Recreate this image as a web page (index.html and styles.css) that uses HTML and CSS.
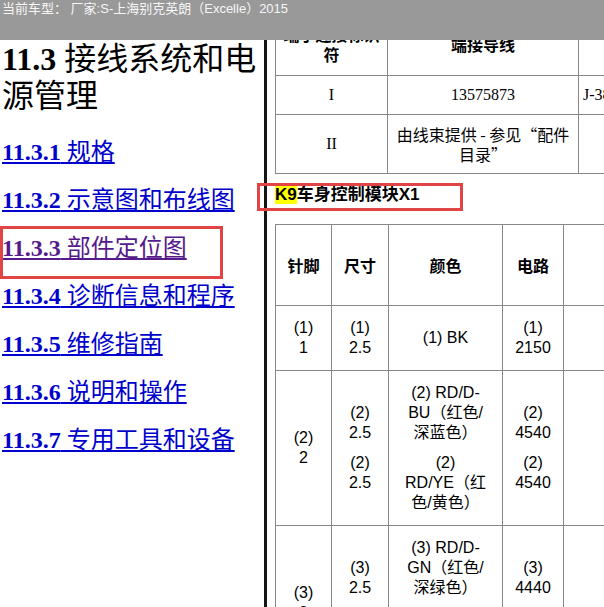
FILE: index.html
```html
<!DOCTYPE html>
<html>
<head>
    <title>11.3 接线系统和电源管理</title>
    <link rel="stylesheet" href="styles.css">
</head>
<body>
    <div class="topbar">当前车型： 厂家:S-上海别克英朗（Excelle）2015</div>

    <div class="frames">
        <div class="toc">
            <h1><b>11.3</b> 接线系统和电源管理</h1>
            <nav class="toc-list">
                <a class="toc-link" href="#"><b>11.3.1</b> 规格</a>
                <a class="toc-link" href="#"><b>11.3.2</b> 示意图和布线图</a>
                <a class="toc-link visited" href="#"><b>11.3.3</b> 部件定位图</a>
                <a class="toc-link" href="#"><b>11.3.4</b> 诊断信息和程序</a>
                <a class="toc-link" href="#"><b>11.3.5</b> 维修指南</a>
                <a class="toc-link" href="#"><b>11.3.6</b> 说明和操作</a>
                <a class="toc-link" href="#"><b>11.3.7</b> 专用工具和设备</a>
            </nav>
        </div>

        <div class="doc">
            <table class="grid conn">
                <colgroup>
                    <col class="w-id">
                    <col class="w-wire">
                    <col class="w-tool">
                </colgroup>
                <thead>
                    <tr>
                        <th>端子连接标识符</th>
                        <th>端接导线</th>
                        <th></th>
                    </tr>
                </thead>
                <tbody>
                    <tr>
                        <td>I</td>
                        <td>13575873</td>
                        <td class="left">J-38125-B 端子测试工具</td>
                    </tr>
                    <tr>
                        <td>II</td>
                        <td class="cjk">由线束提供 - 参见“配件目录”</td>
                        <td></td>
                    </tr>
                </tbody>
            </table>

            <h4 class="part"><span class="mark">K9</span>车身控制模块X1</h4>

            <table class="grid pins">
                <colgroup>
                    <col class="w-pin">
                    <col class="w-size">
                    <col class="w-color">
                    <col class="w-circuit">
                    <col class="w-func">
                </colgroup>
                <thead>
                    <tr>
                        <th>针脚</th>
                        <th>尺寸</th>
                        <th>颜色</th>
                        <th>电路</th>
                        <th></th>
                    </tr>
                </thead>
                <tbody>
                    <tr>
                        <td>(1)<br>1</td>
                        <td>(1)<br>2.5</td>
                        <td>(1) BK</td>
                        <td>(1)<br>2150</td>
                        <td></td>
                    </tr>
                    <tr>
                        <td>(2)<br>2</td>
                        <td><p>(2)<br>2.5</p><p>(2)<br>2.5</p></td>
                        <td><p>(2) RD/D-<br>BU（红色/<br>深蓝色）</p><p>(2)<br>RD/YE（红<br>色/黄色）</p></td>
                        <td><p>(2)<br>4540</p><p>(2)<br>4540</p></td>
                        <td></td>
                    </tr>
                    <tr>
                        <td>(3)<br>3</td>
                        <td><p>(3)<br>2.5</p><p>(3)<br>2.5</p></td>
                        <td><p>(3) RD/D-<br>GN（红色/<br>深绿色）</p><p>(3)<br>RD/WH（红<br>色/白色）</p></td>
                        <td><p>(3)<br>4440</p><p>(3)<br>4440</p></td>
                        <td></td>
                    </tr>
                </tbody>
            </table>
        </div>
    </div>

    <div class="callout callout-toc"></div>
    <div class="callout callout-part"></div>
</body>
</html>
```

FILE: styles.css
```css
html, body {
    margin: 0;
    overflow: hidden;
    background-color: #fff;
}

body {
    width: 604px;
    height: 607px;
    position: relative;
    font-family: "Liberation Serif", "Noto Sans CJK SC", serif;
    color: #000;
}

.topbar {
    position: absolute;
    top: 0;
    left: 0;
    right: 0;
    height: 40px;
    padding-left: 2px;
    background-color: #999;
    color: #f6f6f6;
    font-family: "Liberation Sans", "Noto Sans CJK SC", sans-serif;
    font-size: 13px;
    line-height: 18px;
    z-index: 2;
}

.frames {
    display: flex;
    height: 607px;
}

.toc {
    width: 264px;
    flex-shrink: 0;
    box-sizing: border-box;
    padding: 41px 0 0 2px;
}

.toc h1 {
    margin: 0;
    font-size: 32px;
    line-height: 37px;
    font-weight: normal;
}

.toc-list {
    display: flex;
    flex-direction: column;
    align-items: flex-start;
    gap: 20px;
    margin-top: 23px;
}

.toc-link {
    font-size: 24px;
    line-height: 28px;
    color: #0000cc;
    text-decoration: underline;
}

.toc-link.visited {
    color: #551a8b;
}

.doc {
    flex: 1;
    min-width: 0;
    overflow: hidden;
    border-left: 3px solid #151515;
    padding-left: 8px;
}

.grid {
    border-collapse: collapse;
    table-layout: fixed;
}

.grid th, .grid td {
    border: 1px solid #888;
    text-align: center;
    vertical-align: middle;
    font-size: 16px;
    line-height: 20px;
}

.conn {
    width: 553px;
    margin-top: 16px;
}

.conn th, .conn td {
    padding: 9px 4px;
}

.conn .w-id { width: 112px; }
.conn .w-wire { width: 191px; }
.conn .w-tool { width: 250px; }

.conn .cjk {
    font-family: "Noto Sans CJK SC", sans-serif;
}

.conn .left {
    text-align: left;
}

.part {
    margin: 11px 0 19px 0;
    font-family: "Liberation Sans", "Noto Sans CJK SC", sans-serif;
    font-size: 17px;
    line-height: 20px;
    font-weight: bold;
}

.mark {
    background-color: #ffff00;
}

.pins {
    width: 488px;
    font-family: "Liberation Sans", "Noto Sans CJK SC", sans-serif;
}

.pins th {
    padding: 30px 4px;
    font-family: "Noto Sans CJK SC", sans-serif;
}

.pins td {
    padding: 12px;
    font-family: "Liberation Sans", "Noto Sans CJK SC", sans-serif;
}

.pins p {
    margin: 0;
}

.pins p + p {
    margin-top: 10px;
}

.pins .w-pin { width: 56px; }
.pins .w-size { width: 57px; }
.pins .w-color { width: 114px; }
.pins .w-circuit { width: 61px; }
.pins .w-func { width: 200px; }

.callout {
    position: absolute;
    box-sizing: border-box;
    border: 3px solid #e04444;
    z-index: 3;
}

.callout-toc {
    left: 0;
    top: 226px;
    width: 223px;
    height: 53px;
}

.callout-part {
    left: 257px;
    top: 183px;
    width: 206px;
    height: 28px;
}
```
